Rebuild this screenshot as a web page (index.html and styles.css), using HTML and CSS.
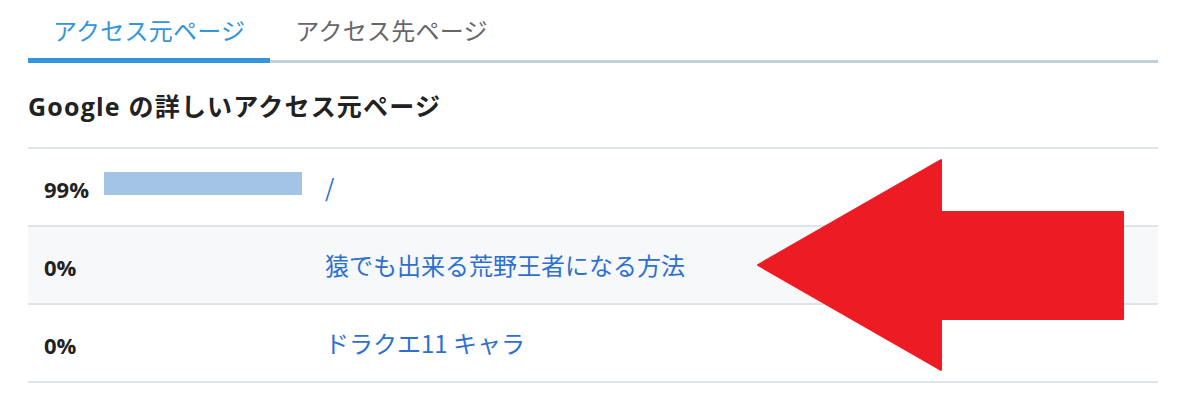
FILE: index.html
```html
<!DOCTYPE html>
<html lang="ja">
<head>
<meta charset="utf-8">
<title>アクセス元ページ</title>
<link rel="stylesheet" href="styles.css">
</head>
<body>
<div class="panel">
  <div class="tabs">
    <div class="tab active">アクセス元ページ</div>
    <div class="tab">アクセス先ページ</div>
  </div>
  <h2 class="title">Google の詳しいアクセス元ページ</h2>
  <div class="table">
    <div class="row">
      <div class="pct">99%</div>
      <div class="barcell"><div class="bar" style="width:99%"></div></div>
      <a class="link" href="#">/</a>
    </div>
    <div class="row alt">
      <div class="pct">0%</div>
      <div class="barcell"></div>
      <a class="link" href="#">猿でも出来る荒野王者になる方法</a>
    </div>
    <div class="row">
      <div class="pct">0%</div>
      <div class="barcell"></div>
      <a class="link" href="#">ドラクエ11 キャラ</a>
    </div>
  </div>
  <svg class="arrow" width="1187" height="409" viewBox="0 0 1187 409" aria-hidden="true">
    <polygon points="758,265 941,160 941,212 1123,212 1123,319 941,319 941,370" fill="#ed1c24" stroke="#ed1c24" stroke-width="2" stroke-linejoin="round"/>
  </svg>
</div>
</body>
</html>
```

FILE: styles.css
```css
html, body {
  margin: 0;
  padding: 0;
  background: #ffffff;
}
body {
  font-family: "Noto Sans CJK JP", "Noto Sans", sans-serif;
  color: #222222;
}
.panel {
  margin: 0 29px 0 28px;
}
.tabs {
  display: flex;
  border-bottom: 3px solid #c3ced6;
}
.tab {
  font-size: 24px;
  letter-spacing: 0.25px;
  line-height: 34px;
  padding: 13px 25px 11px;
  color: #676767;
  margin-bottom: -3px;
  border-bottom: 5px solid transparent;
}
.tab.active {
  color: #3395de;
  border-bottom-color: #3395de;
}
.title {
  margin: 25px 0 23px;
  font-family: "Open Sans", "Noto Sans CJK JP", sans-serif;
  font-size: 25px;
  letter-spacing: 1.2px;
  line-height: 36px;
  font-weight: bold;
  color: #222222;
}
.table {
  border-top: 2px solid #dee4e9;
}
.row {
  display: flex;
  align-items: center;
  height: 76px;
  padding-left: 16px;
  border-bottom: 2px solid #dee4e9;
}
.row.alt {
  background: #f6f8fa;
}
.pct {
  width: 60px;
  font-family: "Open Sans", sans-serif;
  font-weight: bold;
  font-size: 22px;
  color: #222222;
  padding-top: 4px;
}
.barcell {
  width: 200px;
  margin-right: 21px;
  display: flex;
}
.bar {
  height: 23px;
  background: #a3c4e6;
  margin-bottom: 7px;
}
.link {
  color: #2d6fd2;
  text-decoration: none;
  font-size: 24px;
  line-height: 34px;
}
.arrow {
  position: absolute;
  left: 0;
  top: 0;
  pointer-events: none;
}
```
